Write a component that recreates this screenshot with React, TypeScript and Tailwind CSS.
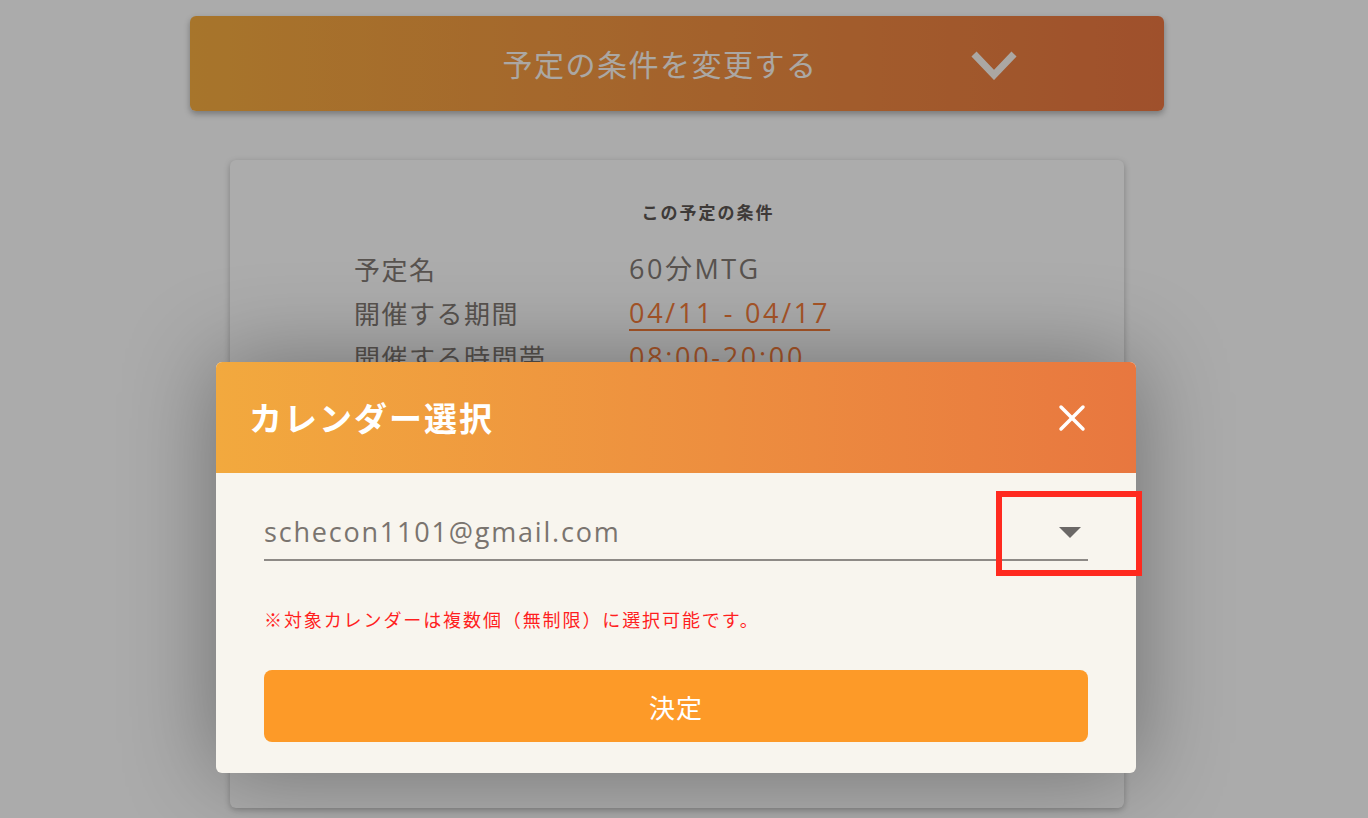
import { X } from "lucide-react";

const rows = [
    { label: "予定名", value: "60分MTG", link: false },
    { label: "開催する期間", value: "04/11 - 04/17", link: true },
    { label: "開催する時間帯", value: "08:00-20:00", link: true },
];

function ConditionCard() {
    return (
        <div className="w-[894px] h-[648px] bg-[#f6f6f6] rounded-md shadow-[0_2px_6px_rgba(0,0,0,0.25)] pt-[40px]">
            <h2 className="text-[17px] leading-[24px] font-bold tracking-[2px] text-[#5a5451] text-center pl-[62px]">この予定の条件</h2>
            <div className="mt-[23px] pl-[124px] flex flex-col">
                {rows.map(r => (
                    <div key={r.label} className="flex text-[26px] leading-[44px]">
                        <span className="w-[275px] text-[#7e7772] tracking-[1.5px]">{r.label}</span>
                        {r.link ? (
                            <span className="font-['Open_Sans','Noto_Sans_CJK_JP',sans-serif] text-[27px] tracking-[2.7px] text-[#f07a3a] underline underline-offset-[6px] decoration-2">{r.value}</span>
                        ) : (
                            <span className="font-['Open_Sans','Noto_Sans_CJK_JP',sans-serif] text-[27px] tracking-[2.5px] text-[#7e7772]">{r.value}</span>
                        )}
                    </div>
                ))}
            </div>
        </div>
    );
}

function CalendarModal() {
    return (
        <div className="relative w-[920px] rounded-md bg-[#f8f5ee] shadow-[0_0_90px_rgba(0,0,0,0.35)]">
            <div className="h-[111px] rounded-t-md bg-gradient-to-r from-[#f2a93e] to-[#e8773f] flex items-center justify-between pl-[33px] pr-[42px]">
                <h1 className="text-[33px] font-bold text-white tracking-[2px]">カレンダー選択</h1>
                <X className="w-[44px] h-[44px] text-white" strokeWidth={1.9} />
            </div>
            <div className="px-[48px] pt-[39px] pb-[31px]">
                <div className="flex items-center justify-between h-[40px] text-[27px] tracking-[1.8px] text-[#7a746f] font-['Open_Sans','Noto_Sans_CJK_JP',sans-serif]">
                    <span>schecon1101@gmail.com</span>
                    <svg width="22" height="11" viewBox="0 0 22 11" className="mr-[7px] mt-[1px]">
                        <path d="M0 0 L22 0 L11 11 Z" fill="#6b6866" />
                    </svg>
                </div>
                <div className="mt-[7px] h-[2px] bg-[#8e8a86]" />
                <p className="mt-[46px] text-[18px] leading-[24px] tracking-[1.9px] text-[#ff1f1f]">※対象カレンダーは複数個（無制限）に選択可能です。</p>
                <button className="mt-[39px] w-full h-[72px] rounded-lg bg-[#fd9a28] text-white text-[26px] tracking-[1px]">決定</button>
            </div>
            <div className="absolute left-[780px] top-[129px] w-[146px] h-[85px] border-[6px] border-[#ff2a1f]" />
        </div>
    );
}

export default function App() {
    return (
        <div className="relative w-[1368px] h-[818px] overflow-hidden bg-[#f5f5f5] font-['Noto_Sans_CJK_JP','Noto_Sans',sans-serif]">
            <div className="flex flex-col items-center pr-[14px] pt-[16px]">
                <div className="relative w-[974px] h-[95px] rounded-md bg-gradient-to-r from-[#f0a83e] to-[#e4733f] shadow-[0_3px_6px_rgba(0,0,0,0.3)] flex items-center justify-center pr-[34px]">
                    <span className="text-[30px] tracking-[1.5px] text-[#f5f0ea]">予定の条件を変更する</span>
                    <svg width="48" height="30" viewBox="0 0 48 30" className="absolute right-[146px] top-[34px]">
                        <path d="M4 4 L24 25 L44 4" fill="none" stroke="#f5f0ea" strokeWidth="7" />
                    </svg>
                </div>
                <div className="mt-[49px]">
                    <ConditionCard />
                </div>
            </div>
            <div className="absolute inset-0 bg-black/30 flex items-start justify-center pr-[16px] pt-[362px]">
                <CalendarModal />
            </div>
        </div>
    );
}
